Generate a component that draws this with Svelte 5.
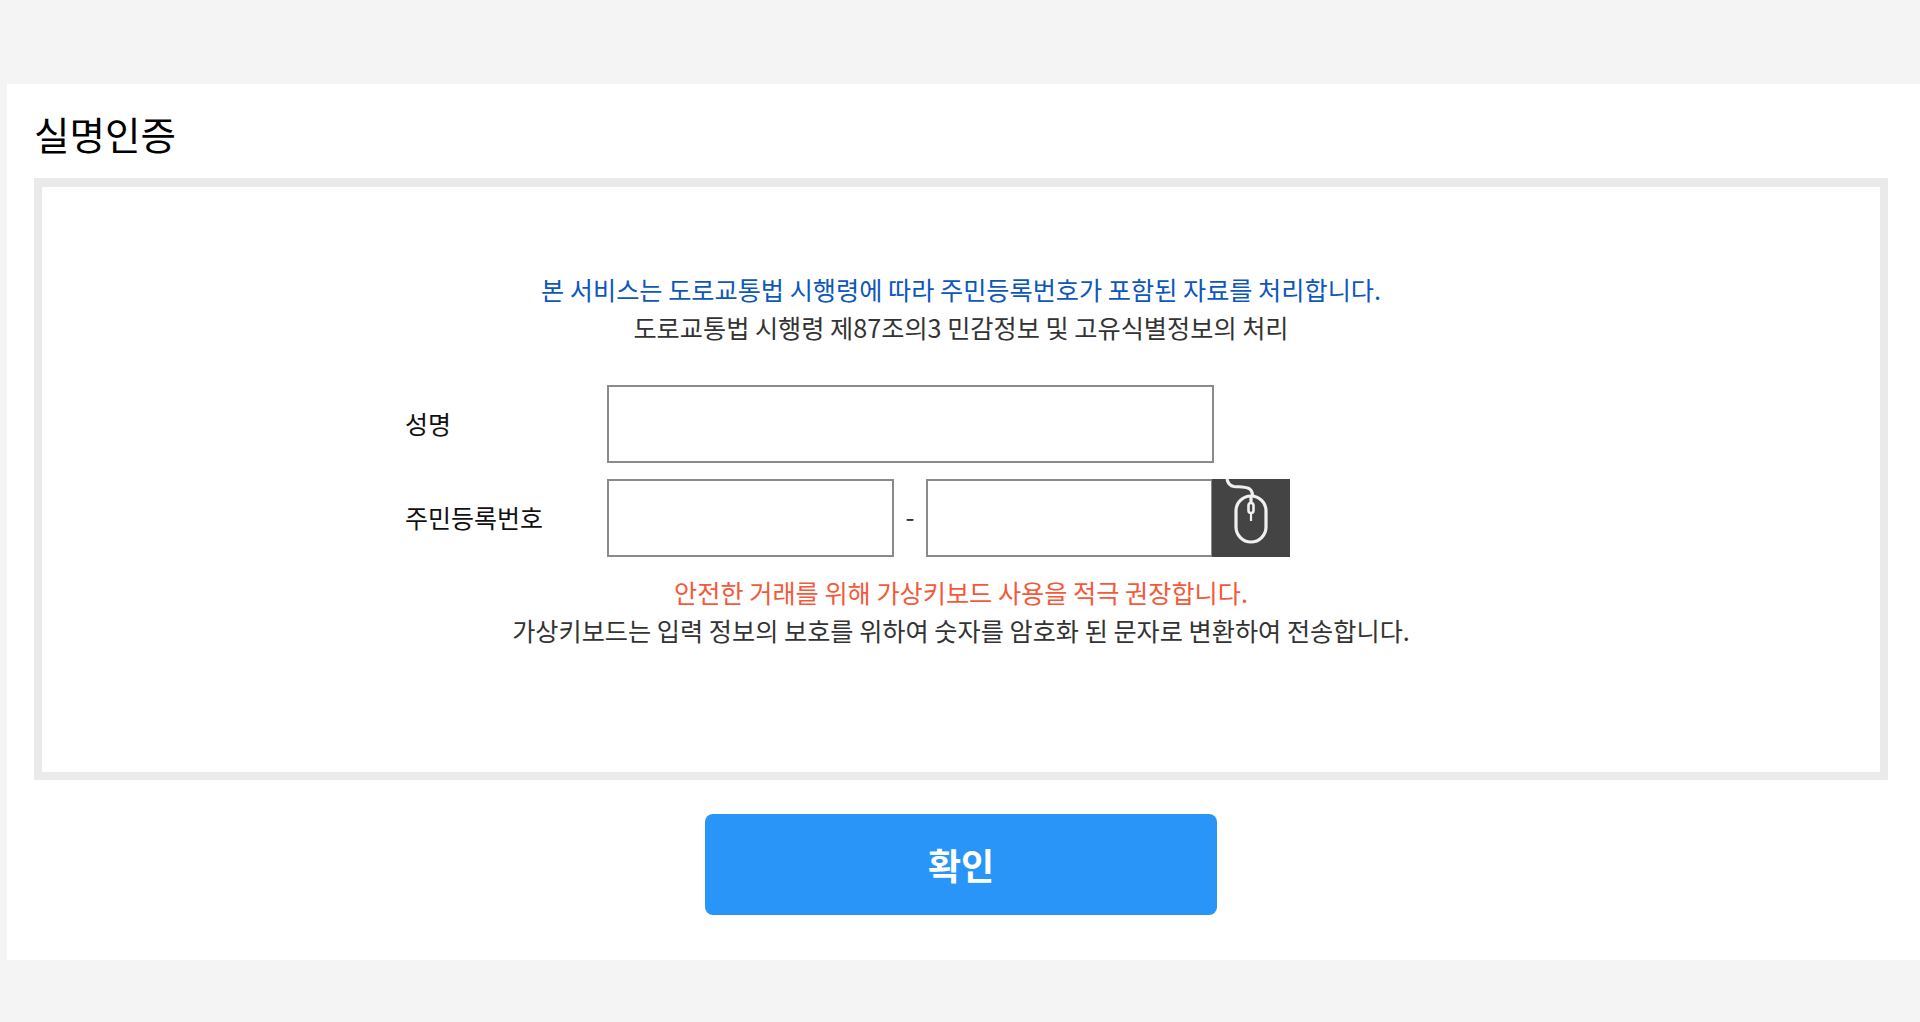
<script>
  let name = "";
  let rrnFront = "";
  let rrnBack = "";
</script>

<div class="page">
  <main class="card">
    <h1>실명인증</h1>
    <section class="box">
      <p class="notice blue">본 서비스는 도로교통법 시행령에 따라 주민등록번호가 포함된 자료를 처리합니다.</p>
      <p class="notice">도로교통법 시행령 제87조의3 민감정보 및 고유식별정보의 처리</p>

      <form class="form">
        <div class="row">
          <label for="name">성명</label>
          <input id="name" class="name" type="text" bind:value={name} />
        </div>
        <div class="row">
          <label for="rrn">주민등록번호</label>
          <input id="rrn" class="rrn" type="text" bind:value={rrnFront} />
          <span class="dash">-</span>
          <input class="rrn" type="password" bind:value={rrnBack} />
          <button type="button" class="mouse" aria-label="가상키보드">
            <svg width="78" height="78" viewBox="0 0 78 78" fill="none" stroke="#f0f0f0" stroke-width="3.2">
              <path d="M15 0c1 5 3 7 7 7.5 5 .5 11 0 15 2 3 2 3.5 4 3.5 7" />
              <rect x="24" y="17" width="30" height="46" rx="15" />
              <path d="M39 17v6" />
              <rect x="36.5" y="24" width="5" height="10" rx="2.5" stroke-width="2.6" />
              <path d="M39 34v8" stroke-width="2.2" />
            </svg>
          </button>
        </div>
      </form>

      <p class="notice red">안전한 거래를 위해 가상키보드 사용을 적극 권장합니다.</p>
      <p class="notice">가상키보드는 입력 정보의 보호를 위하여 숫자를 암호화 된 문자로 변환하여 전송합니다.</p>
    </section>
    <div class="actions">
      <button type="button" class="confirm">확인</button>
    </div>
  </main>
</div>

<style>
  :global(body) {
    margin: 0;
    background: #f4f4f4;
    font-family: "Noto Sans CJK KR", "Noto Sans", sans-serif;
  }

  .page {
    height: 1022px;
    padding: 84px 0 62px 7px;
    box-sizing: border-box;
  }

  .card {
    height: 876px;
    background: #fff;
    padding: 0 32px 0 27px;
    box-sizing: border-box;
    overflow: hidden;
  }

  h1 {
    margin: 0;
    height: 94px;
    line-height: 98px;
    font-size: 38.6px;
    font-weight: 400;
    color: #000;
  }

  .box {
    height: 602px;
    border: 8px solid #eaeaea;
    border-top-width: 9px;
    box-sizing: border-box;
    padding-top: 83px;
  }

  .notice {
    margin: 0;
    height: 38px;
    line-height: 38px;
    text-align: center;
    font-size: 25.2px;
    color: #333;
  }

  .blue {
    color: #0d57bd;
  }

  .red {
    color: #f4593b;
  }

  .form {
    margin: 39px 0 16px 357px;
    display: flex;
    flex-direction: column;
    gap: 16px;
  }

  .row {
    display: flex;
    align-items: center;
    height: 78px;
  }

  label {
    width: 202px;
    padding: 0 0 2px 6px;
    font-size: 25px;
    color: #111;
  }

  input {
    height: 78px;
    border: 2px solid #8a8a8a;
    box-sizing: border-box;
    padding: 0 10px;
    background: #fff;
    outline: none;
  }

  .name {
    width: 607px;
  }

  .rrn {
    width: 287px;
  }

  .dash {
    width: 32px;
    padding-bottom: 6px;
    text-align: center;
    font-size: 26px;
    color: #333;
  }

  .mouse {
    width: 78px;
    height: 78px;
    padding: 0;
    margin-left: -1px;
    border: 0;
    background: #444;
    overflow: hidden;
  }

  .mouse svg {
    display: block;
  }

  .actions {
    display: flex;
    justify-content: center;
    padding-top: 34px;
  }

  .confirm {
    width: 512px;
    height: 101px;
    padding: 0 0 2px;
    border: 0;
    border-radius: 8px;
    background: #2a95f9;
    color: #fff;
    font-family: inherit;
    font-size: 36px;
    font-weight: 700;
  }
</style>
